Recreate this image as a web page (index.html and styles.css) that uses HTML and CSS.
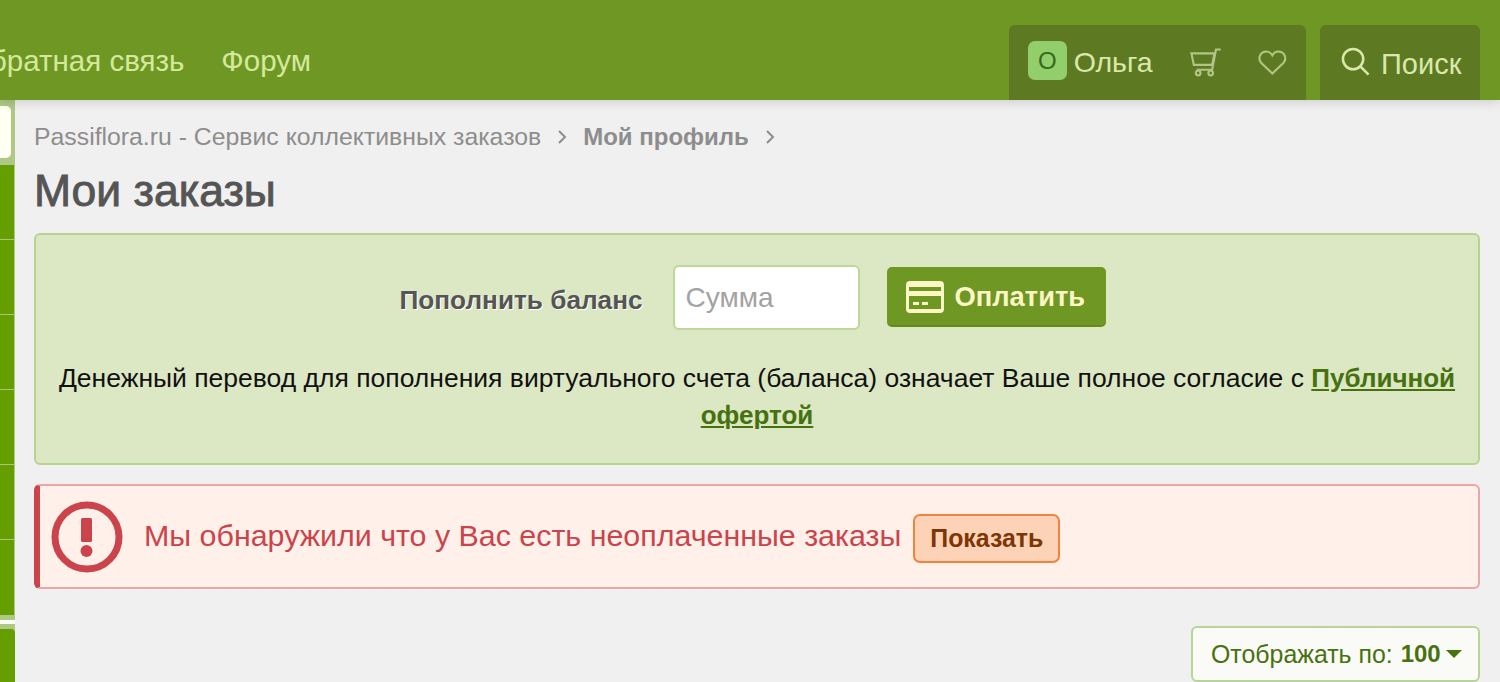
FILE: index.html
```html
<!DOCTYPE html>
<html lang="ru">
<head>
    <meta charset="UTF-8">
    <meta name="viewport" content="width=device-width, initial-scale=1.0">
    <title>Мои заказы</title>
    <link rel="stylesheet" href="styles.css">
</head>
<body>
    <header class="topbar">
        <nav class="topnav">
            <a href="#">Обратная связь</a>
            <a href="#">Форум</a>
        </nav>
        <div class="userbox">
            <span class="avatar">О</span>
            <span class="username">Ольга</span>
            <svg class="icon-cart" viewBox="0 0 34 30" fill="none" stroke="currentColor" stroke-width="2.2">
                <path d="M32 1.5h-5l-4 21H7"/>
                <path d="M1.5 5.5h24l-2.5 12H4z"/>
                <circle cx="8.5" cy="26" r="2.4"/>
                <circle cx="21.5" cy="26" r="2.4"/>
            </svg>
            <svg class="icon-heart" viewBox="0 0 30 26" fill="none" stroke="currentColor" stroke-width="2.2">
                <path d="M15 24.5 3.500 13.500C-.5 9 2 2 8 1.600c3-.2 5.500 1.400 7 4 1.500-2.600 4-4.200 7-4 6 .4 8.500 7.400 4.500 11.900z"/>
            </svg>
        </div>
        <div class="searchbox">
            <svg class="icon-search" viewBox="0 0 30 30" fill="none" stroke="currentColor" stroke-width="2.600">
                <circle cx="12.500" cy="12.500" r="10.500"/>
                <path d="m20 20 8.500 8.500"/>
            </svg>
            <span>Поиск</span>
        </div>
    </header>

    <div class="page">
        <aside class="sidebar">
            <div class="side-active"></div>
            <div class="side-item"></div>
            <div class="side-item"></div>
            <div class="side-item"></div>
            <div class="side-item"></div>
            <div class="side-item"></div>
            <div class="side-item side-last"></div>
            <div class="side-gap"></div>
            <div class="side-bottom"></div>
        </aside>

        <main class="content">
            <div class="breadcrumbs">
                <a href="#">Passiflora.ru - Сервис коллективных заказов</a>
                <svg class="crumb-arrow" viewBox="0 0 10 16" fill="none" stroke="currentColor" stroke-width="2"><path d="m2 2 6 6-6 6"/></svg>
                <a href="#" class="crumb-current">Мой профиль</a>
                <svg class="crumb-arrow" viewBox="0 0 10 16" fill="none" stroke="currentColor" stroke-width="2"><path d="m2 2 6 6-6 6"/></svg>
            </div>

            <h1 class="page-title">Мои заказы</h1>

            <section class="balance">
                <form class="balance-form">
                    <label class="balance-label" for="summa">Пополнить баланс</label>
                    <input class="balance-input" id="summa" type="text" placeholder="Сумма">
                    <button class="pay-btn" type="button">
                        <svg class="icon-card" viewBox="0 0 38 32">
                            <path fill-rule="evenodd" fill="currentColor" d="M4 0h30a4 4 0 0 1 4 4v24a4 4 0 0 1-4 4H4a4 4 0 0 1-4-4V4a4 4 0 0 1 4-4zm-1 6v4h32V6zm0 9v13h32V15zm4 6h6v3H7zm9 0h6v3h-6z"/>
                        </svg>
                        Оплатить
                    </button>
                </form>
                <p class="balance-note">Денежный перевод для пополнения виртуального счета (баланса) означает Ваше полное согласие с <a href="#">Публичной офертой</a></p>
            </section>

            <section class="notice">
                <svg class="icon-alert" viewBox="0 0 72 72">
                    <circle cx="36" cy="36" r="32" fill="none" stroke="currentColor" stroke-width="7"/>
                    <rect x="30" y="17" width="11" height="24" rx="1.500" fill="currentColor"/>
                    <circle cx="35.500" cy="50" r="6" fill="currentColor"/>
                </svg>
                <span class="notice-text">Мы обнаружили что у Вас есть неоплаченные заказы</span>
                <button class="show-btn" type="button">Показать</button>
            </section>

            <div class="toolbar">
                <div class="perpage">Отображать по: <b>100</b><span class="caret"></span></div>
            </div>
        </main>
    </div>
</body>
</html>
```

FILE: styles.css
```css
* {
    box-sizing: border-box;
}

html, body {
    height: 100%;
}

body {
    margin: 0;
    overflow: hidden;
    background-color: #f0f0f0;
    font-family: "Liberation Sans", Arial, sans-serif;
    color: #555;
}

a {
    color: inherit;
    text-decoration: none;
}

/* Шапка */
.topbar {
    position: relative;
    z-index: 2;
    display: flex;
    align-items: flex-end;
    height: 100px;
    padding-right: 20px;
    background-color: #6f9724;
    box-shadow: 0 2px 10px rgba(0, 0, 0, .15);
}

.topnav {
    display: flex;
    gap: 37px;
    align-self: center;
    margin-left: -33px;
    margin-right: auto;
    padding-top: 21px;
    font-size: 29.500px;
    color: #d5e99c;
    white-space: nowrap;
}

.userbox,
.searchbox {
    display: flex;
    align-items: center;
    height: 75px;
    background-color: #5d7a22;
    border-radius: 6px 6px 0 0;
    color: #dbe8ab;
}

.userbox {
    width: 297px;
    padding: 0 19px 0 19px;
    margin-right: 14px;
}

.avatar {
    display: flex;
    align-items: center;
    justify-content: center;
    width: 39px;
    height: 39px;
    margin-top: -4px;
    border-radius: 7px;
    background-color: #92cf6c;
    color: #37691a;
    font-size: 24px;
}

.username {
    margin-left: 7px;
    font-size: 28.500px;
}

.icon-cart {
    width: 33px;
    height: 29px;
    margin-left: 37px;
    color: #b2c585;
}

.icon-heart {
    width: 29px;
    height: 25px;
    margin-left: 36px;
    color: #b2c585;
}

.searchbox {
    width: 160px;
    padding-left: 21px;
    font-size: 29px;
}

.icon-search {
    width: 29px;
    height: 29px;
    margin-right: 11px;
    margin-top: -2px;
}

.searchbox span {
    margin-top: 4px;
}

/* Левая колонка */
.page {
    display: flex;
    height: 582px;
}

.sidebar {
    flex: 0 0 15px;
    padding-top: 6px;
    background-color: #aec986;
}

.side-active {
    width: 11px;
    height: 52px;
    margin-bottom: 7px;
    background-color: #fffff2;
    border-radius: 0 5px 5px 0;
}

.side-item {
    width: 14px;
    height: 75px;
    background-color: #659e00;
    border-bottom: 1px solid #a9c77a;
}

.side-last {
    height: 75px;
    border-bottom: 0;
}

.side-gap {
    width: 15px;
    height: 4px;
    margin: 5px 0;
    background-color: #fbfdf5;
}

.side-bottom {
    height: 60px;
    background-color: #659e00;
    border-radius: 0 4px 0 0;
}

/* Контент */
.content {
    flex: 1;
    padding: 0 20px 0 19px;
    min-width: 0;
}

.breadcrumbs {
    display: flex;
    align-items: center;
    height: 24px;
    margin-top: 25px;
    font-size: 24.800px;
    color: #8d8d8d;
    white-space: nowrap;
}

.crumb-current {
    font-size: 24px;
    font-weight: bold;
}

.crumb-arrow {
    width: 10px;
    height: 16px;
    margin: 0 16px;
}

.page-title {
    margin: 17px 0 0;
    font-size: 44.500px;
    line-height: 50px;
    font-weight: normal;
    -webkit-text-stroke: .9px #555;
    color: #555;
}

.balance {
    height: 232px;
    margin-top: 17px;
    padding-top: 30px;
    background-color: #dce7c3;
    border: 2px solid #b6d48f;
    border-radius: 6px;
    text-align: center;
}

.balance-form {
    display: flex;
    align-items: center;
    justify-content: center;
    gap: 27px;
    padding-right: 9px;
}

.balance-label {
    margin: 6px 3px 0 0;
    font-size: 26.200px;
    font-weight: bold;
    color: #555;
    text-shadow: 1px 1px 0 #fff;
}

.balance-input {
    width: 187px;
    height: 65px;
    padding: 0 11px;
    background-color: #fff;
    border: 2px solid #bdd797;
    border-radius: 6px;
    font-family: inherit;
    font-size: 28px;
    color: #555;
    outline: none;
}

.balance-input::placeholder {
    color: #a3a3a3;
}

.pay-btn {
    display: flex;
    align-items: center;
    gap: 11px;
    width: 219px;
    height: 60px;
    margin-top: -2px;
    padding: 3px 0 0 19px;
    background-color: #6f9724;
    border: 0;
    border-bottom: 2px solid #638a1c;
    border-radius: 5px;
    font-family: inherit;
    font-size: 27.300px;
    font-weight: bold;
    color: #fbf6c4;
}

.icon-card {
    width: 38px;
    height: 32px;
}

.balance-note {
    margin: 30px 0 0;
    padding: 0 10px;
    font-size: 26.500px;
    line-height: 37px;
    color: #111;
}

.balance-note a {
    font-size: 26px;
    font-weight: bold;
    color: #46710f;
    text-decoration: underline;
}

.notice {
    display: flex;
    align-items: center;
    height: 105px;
    margin-top: 19px;
    padding-left: 11px;
    background-color: #fff1e9;
    border: 2px solid #eba6a6;
    border-left: 6px solid #cb444c;
    border-radius: 6px;
}

.icon-alert {
    width: 72px;
    height: 72px;
    color: #cb444c;
}

.notice-text {
    margin-left: 21px;
    margin-top: -3px;
    font-size: 30.400px;
    color: #cb444c;
}

.show-btn {
    width: 147px;
    height: 49px;
    margin-left: 12px;
    margin-top: 3px;
    padding: 0;
    background-color: #fdd3b8;
    border: 2px solid #f2823d;
    border-radius: 7px;
    font-family: inherit;
    font-size: 24.900px;
    font-weight: bold;
    color: #7d3605;
}

.toolbar {
    display: flex;
    justify-content: flex-end;
    margin-top: 37px;
}

.perpage {
    display: flex;
    align-items: center;
    width: 289px;
    height: 56px;
    padding-left: 18px;
    background-color: #fafbf7;
    border: 2px solid #b7d596;
    border-radius: 6px;
    font-size: 24.900px;
    color: #48710f;
    white-space: pre;
}

.perpage b {
    margin-left: 1px;
    font-size: 24px;
}

.caret {
    width: 0;
    height: 0;
    margin-left: 5px;
    border-left: 8px solid transparent;
    border-right: 8px solid transparent;
    border-top: 8px solid #48710f;
}
```
